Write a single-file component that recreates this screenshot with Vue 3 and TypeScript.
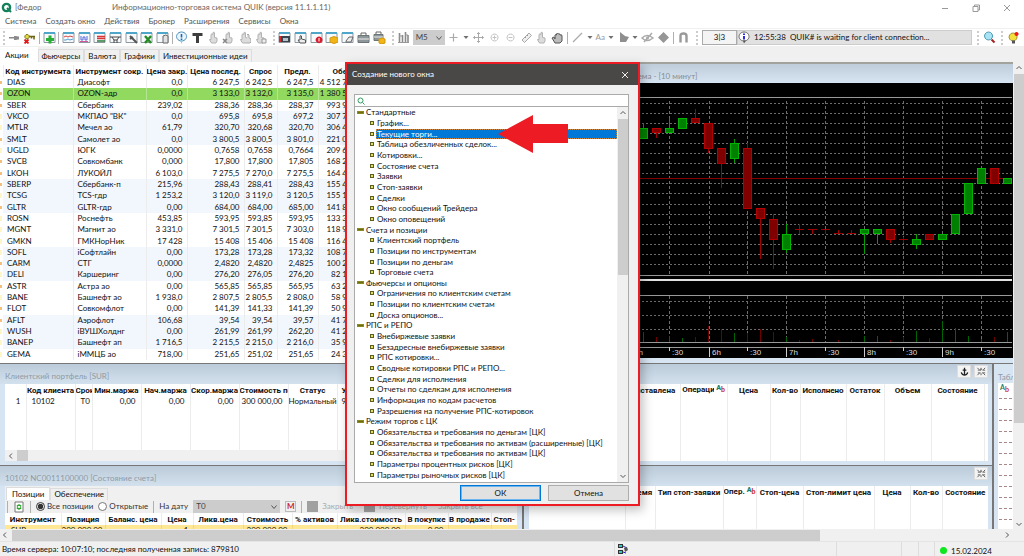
<script setup lang="ts">
import { ref } from 'vue'

interface Shape { d: string; f?: string; s?: string; w?: number }
type Icon = Shape[]

const frame: Shape[] = [
  { d: 'M1 2h11v9.500h-11z', f: '#f7f9fb', s: '#8d979f' },
  { d: 'M1 1h11v2h-11z', f: '#4fa6c9' },
]
const hand: string = 'M4 11.500L2.500 8.500L4 8.500V3.500Q5 2 6 3.500V1.500Q7 .5 7.500 2V6.500L10 7V10L9 12H5z'

const icons: Record<string, Icon> = {
  pin: [{ d: 'M1 6h6v1.500h-6z', f: '#888' }, { d: 'M6 5h2l2 .5h1v3h-1l-2 .5h-2z', f: '#8b8b8b' }],
  key: [
    { d: 'M6 5.500h6M11 5.500v3M8.500 5.500v2', s: '#6b6410', w: 1.500 },
    { d: 'M4 3.500a2.200 2.200 0 1 0 .1 0z', f: '#e8dc45', s: '#777018' },
    { d: 'M1.500 8.500l4 4M5.500 8.500l-4 4', s: '#e21b1b', w: 1.800 },
  ],
  add: [...frame, { d: 'M7 4.500v8M3 8.500h8', s: '#27ae35', w: 3 }],
  price: [...frame, { d: 'M2 6l2-1 2 1 2-1 3 1', s: '#d84444' }, { d: 'M2 9l2 0 2-1 2 1 3-1', s: '#4a9ed4' }],
  graph: [...frame, { d: 'M3 5v4h2v-3h2v3h2v-4', s: '#5866dd' }, { d: 'M2 10.500h8', s: '#cf5a97' }],
  quotes: [...frame, { d: 'M4 5.500h8M4 7.500h8', s: '#da3434', w: 1.500 }, { d: 'M4 10h8', s: '#2c7a3c', w: 1.500 }],
  filter: [...frame, { d: 'M1 6h11M3 6l2 3v3M10 6l-2 3v3M5 9h3', s: '#444' }],
  tool: [...frame, { d: 'M5 5l3 3 4 4M5 8l3-2', s: '#555', w: 2 }],
  excel: [...frame, { d: 'M5 5l6 7M11 5l-6 7', s: '#258b25', w: 2.400 }],
  store: [...frame, { d: 'M7 5q3-2 5 0v7h-5z', f: '#e2e2e2', s: '#666' }],
  info: [{ d: 'M6.500 1a5 4.500 0 1 0 .1 0z', f: '#eaf6ff', s: '#4c8ebb' }, { d: 'M5 9l1.500 4 1.500-4', f: '#9ac7df' }, { d: 'M6.500 3v3.500M6.500 7.500v1.500', s: '#1c67b0', w: 1.600 }],
  text: [{ d: 'M1.500 2h10v3h-3.500v7h-3v-7h-3.500z', f: '#3d3d3d' }],
  hand: [{ d: hand, f: '#dcdcdc', s: '#b2b2b2' }],
  handx: [{ d: hand, f: '#dcdcdc', s: '#b2b2b2' }, { d: 'M1 8l4 4M5 8l-4 4', s: '#888', w: 1.500 }],
  hands: [{ d: hand, f: '#dcdcdc', s: '#b2b2b2' }, { d: 'M9 4q1-2 2 0v3l2 1v3l-1 1h-3', f: '#ddd', s: '#aaa' }],
  handb: [{ d: hand, f: '#dcdcdc', s: '#b2b2b2' }, { d: 'M8 8h4v4h-4z', f: '#eee', s: '#999' }],
  movie: [...frame, { d: 'M2 5h10v6h-10z', f: '#39444d' }, { d: 'M1 5h2v6h-2z', f: '#d32b2b' }, { d: 'M5 7h5v3h-5z', f: '#b7c3cc' }],
  touch: [...frame, { d: 'M6 12l-2-3 2 0V5q1-1 1.500 0v3l4 1v3z', f: '#eee', s: '#555' }],
  alert: [...frame, { d: 'M9 5.500a3.400 3.400 0 1 0 .1 0z', f: '#d81c2c' }, { d: 'M9 7v3.500', s: '#fff' }],
  coin: [...frame, { d: 'M5 7q4-3 8 0v4q-4 3-8 0z', f: '#f2b417', s: '#d39a14' }],
  edit: [...frame, { d: 'M5 10l3-4h4l-2 5h-5z', f: '#eee', s: '#666' }],
  case: [{ d: 'M1 4.500h11v7h-11z', f: '#8d9698', s: '#6b7476' }, { d: 'M4 4v-2h5v2', s: '#666' }, { d: 'M1 8h11', s: '#eee' }],
  casec: [{ d: 'M1 3.500h9v6h-9z', f: '#8d9698', s: '#6b7476' }, { d: 'M3 3v-2h5v2', s: '#666' }, { d: 'M1 6h9', s: '#eee' }, { d: 'M6 8q3-2 6 0v4q-3 2-6 0z', f: '#f2b417', s: '#d39a14' }],
  bars: [{ d: 'M2.500 2v9M5.500 4v7M8.500 1v10M11 4v7', s: '#8a8a8a', w: 1.600 }, { d: 'M1 11.500h11M2 5h3M8 4h3', s: '#999' }],
  plus: [{ d: 'M6.500 2.500v8M2.500 6.500h8', s: '#aaa', w: 1.200 }],
  caret: [{ d: 'M.5 5h5l-2.500 3z', f: '#707070' }],
  move: [{ d: 'M6.500 1.500v10M1.500 6.500h10M5 3l1.500-1.500 1.500 1.500M5 10l1.500 1.500 1.500-1.500M3 5l-1.500 1.500 1.500 1.500M10 5l1.500 1.500-1.500 1.500', s: '#aaa' }],
  zin: [{ d: 'M6.500 3a3.500 3.500 0 1 0 .1 0zM4.500 6.500h4M6.500 4.500v4', s: '#c2c2c2' }],
  zout: [{ d: 'M6.500 3a3.500 3.500 0 1 0 .1 0zM4.500 6.500h4', s: '#c2c2c2' }],
  ruler: [{ d: 'M2 9l7-7 2.500 2.500-7 7z', f: '#eee', s: '#aaa' }, { d: 'M5 6l1 1M7 4l1 1', s: '#999' }],
  grab: [{ d: 'M4 12l-3-5 2-1 1 2V4q1-1 1.500 0V3q1-2 2 0q1-1 1.500 1q2-1 2 1v5l-2 2z', f: '#bbb', s: '#555' }],
  line: [{ d: 'M2 11l9-9', s: '#aaa', w: 1.200 }],
  play: [{ d: 'M3 1l5 4 4 1-3 5h-6z', f: '#8f8f8f' }],
  eye: [{ d: 'M1 7q5-5 11 0q-6 5-11 0zM3 11l8-9', s: '#aaa', w: 1.500 }, { d: 'M6.500 5.500a1.500 1.500 0 1 0 .1 0z', f: '#aaa' }],
  diamond: [{ d: 'M6.500 1l5.500 5.500-5.500 5.500-5.500-5.500z', f: '#969696' }],
  magnet: [{ d: 'M3.500 11.500V5q0-2.500 3-2.500t3 2.500v6.500', s: '#999', w: 2.400 }],
  search: [{ d: 'M5.500 1a4 4 0 1 0 .1 0z', f: '#a9e4f5', s: '#4d9bb4' }, { d: 'M8.500 8.500l3 3', s: '#a52020', w: 2 }],
  bulb: [{ d: 'M6 2a4 4 0 1 0 .1 0z', f: '#f4df3c', s: '#a39535' }, { d: 'M5 9.500h3v3h-3z', f: '#555' }, { d: 'M9.500 1a2 2 0 1 0 .1 0z', f: '#f01c1c' }],
}

const toolsA = ['pin', 'key', '|', 'add', '|', 'price', 'graph', 'quotes', 'filter', 'tool', 'excel', 'store', '|', 'info', 'text', 'hand', 'handx', 'hands', 'handb']
const toolsB = ['movie', 'touch', 'alert', 'coin', 'edit', 'case', 'casec']
const toolsC = ['plus', 'caret', 'move', 'zin', 'zout', 'ruler', 'hand', 'grab', '|', 'line', 'caret', 'Aa', 'caret', 'play', 'caret', 'eye', 'diamond', '|', 'magnet']

const menu = ['Система', 'Создать окно', 'Действия', 'Брокер', 'Расширения', 'Сервисы', 'Окна']
const tabs = ['Акции', 'Фьючерсы', 'Валюта', 'Графики', 'Инвестиционные идеи']

const quoteCols = ['Код инструмента', 'Инструмент сокр.', 'Цена закр.', 'Цена послед.', 'Спрос', 'Предл.', 'Обе']
const quotes: string[][] = [
  ['DIAS', 'Диасофт', '0,0', '6 247,5', '6 242,5', '6 247,5', '4 512 7'],
  ['OZON', 'OZON-адр', '0,0', '3 133,0', '3 132,0', '3 135,0', '1 380 5'],
  ['SBER', 'Сбербанк', '239,02', '288,36', '288,36', '288,37', '993 9'],
  ['VKCO', 'МКПАО "ВК"', '0,0', '695,8', '695,8', '697,2', '307 7'],
  ['MTLR', 'Мечел ао', '61,79', '320,70', '320,68', '320,70', '306 4'],
  ['SMLT', 'Самолет ао', '0,0', '3 800,5', '3 800,5', '3 801,0', '221 0'],
  ['UGLD', 'ЮГК', '0,0000', '0,7658', '0,7658', '0,7664', '209 6'],
  ['SVCB', 'Совкомбанк', '0,000', '17,800', '17,800', '17,805', '168 2'],
  ['LKOH', 'ЛУКОЙЛ', '6 103,0', '7 275,5', '7 270,0', '7 275,5', '164 4'],
  ['SBERP', 'Сбербанк-п', '215,96', '288,43', '288,41', '288,43', '155 4'],
  ['TCSG', 'TCS-гдр', '1 253,2', '3 120,0', '3 119,0', '3 120,5', '155 1'],
  ['GLTR', 'GLTR-гдр', '0,00', '684,00', '684,00', '685,00', '141 8'],
  ['ROSN', 'Роснефть', '453,85', '593,95', '593,85', '593,95', '133 3'],
  ['MGNT', 'Магнит ао', '3 331,0', '7 301,5', '7 301,5', '7 303,0', '118 9'],
  ['GMKN', 'ГМКНорНик', '17 428', '15 408', '15 406', '15 408', '116 4'],
  ['SOFL', 'iСофтлайн', '0,00', '173,28', '173,28', '173,32', '108 7'],
  ['CARM', 'СТГ', '0,0000', '2,4820', '2,4820', '2,4825', '100 2'],
  ['DELI', 'Каршеринг', '0,00', '276,20', '276,05', '276,20', '82 1'],
  ['ASTR', 'Астра ао', '0,00', '565,85', '565,85', '565,95', '63 2'],
  ['BANE', 'Башнефт ао', '1 938,0', '2 807,5', '2 805,5', '2 808,0', '58 9'],
  ['FLOT', 'Совкомфлот', '0,00', '141,39', '141,33', '141,39', '50 9'],
  ['AFLT', 'Аэрофлот', '106,68', '39,54', '39,54', '39,57', '41 7'],
  ['WUSH', 'iВУШХолднг', '0,00', '261,99', '261,99', '262,20', '41 2'],
  ['BANEP', 'Башнефт ап', '1 716,5', '2 215,5', '2 215,0', '2 216,0', '35 9'],
  ['GEMA', 'iММЦБ ао', '718,00', '251,65', '251,02', '251,65', '24 3'],
]
const dotted = [0, 1, 2, 5, 7, 8, 9, 11, 16, 18, 20, 21]

const portfolioCols = ['', 'Код клиента', 'Срок', 'Мин.маржа', 'Нач.маржа', 'Скор.маржа', 'Стоимость по', 'Статус', 'У']
const portfolioRow = ['1', '10102', 'T0', '0,00', '0,00', '0,00', '300 000,00', 'Нормальный', '9']
const accountCols = ['Инструмент', 'Позиция', 'Баланс. цена', 'Цена', 'Ликв.цена', 'Стоимость', '% активов', 'Ликв.стоимость', 'В покупке', 'В продаже', 'Стоп-']
const accountRow = ['SUR', '300 000,00', '', '1', '', '300 000,00', '', '300 000,00', '0,00', '', '']
const orderCols = ['', 'Выставлена', 'Операция', 'Цена', 'Кол-во', 'Исполнено', 'Остаток', 'Объем', 'Состояние', '']
const stopCols = ['', 'Время', 'Тип стоп-заявки', 'Опер.', 'Стоп-цена', 'Стоп-лимит цена', 'Цена', 'Кол-во', 'Состояние']

const tree: { title: string; items: string[] }[] = [
  { title: 'Стандартные', items: ['График...', 'Текущие торги...', 'Таблица обезличенных сделок...', 'Котировки...', 'Состояние счета', 'Заявки', 'Стоп-заявки', 'Сделки', 'Окно сообщений Трейдера', 'Окно оповещений'] },
  { title: 'Счета и позиции', items: ['Клиентский портфель', 'Позиции по инструментам', 'Позиции по деньгам', 'Торговые счета'] },
  { title: 'Фьючерсы и опционы', items: ['Ограничения по клиентским счетам', 'Позиции по клиентским счетам', 'Доска опционов...'] },
  { title: 'РПС и РЕПО', items: ['Внебиржевые заявки', 'Безадресные внебиржевые заявки', 'РПС котировки...', 'Сводные котировки РПС и РЕПО...', 'Сделки для исполнения', 'Отчеты по сделкам для исполнения', 'Информация по кодам расчетов', 'Разрешения на получение РПС-котировок'] },
  { title: 'Режим торгов с ЦК', items: ['Обязательства и требования по деньгам [ЦК]', 'Обязательства и требования по активам (расширенные) [ЦК]', 'Обязательства и требования по активам [ЦК]', 'Параметры процентных рисков [ЦК]', 'Параметры рыночных рисков [ЦК]'] },
]
const rows = tree.flatMap(g => [{ text: g.title, group: true }, ...g.items.map(text => ({ text, group: false }))])
const selected = ref('Текущие торги...')
const query = ref('')
const scope = ref('all')

// Candle: x, body top, body bottom, wick top, wick bottom, direction, volume
type Candle = [number, number, number, number, number, 'g' | 'r', number]
const candles: Candle[] = [
  [643, 128, 139, 123, 139, 'g', 10], [656, 128, 133, 128, 138, 'r', 5], [669, 128, 133, 118, 133, 'g', 6],
  [682, 118, 129, 118, 129, 'g', 4], [695, 118, 123, 109, 123, 'r', 5], [708, 123, 149, 123, 153, 'r', 16],
  [721, 148, 164, 148, 188, 'r', 13], [734, 143, 159, 139, 163, 'g', 9], [747, 148, 209, 143, 209, 'r', 9],
  [760, 208, 219, 208, 259, 'r', 13], [773, 219, 240, 214, 269, 'r', 10], [786, 234, 250, 224, 253, 'g', 5],
  [799, 229, 230, 224, 234, 'r', 2], [812, 229, 230, 229, 234, 'r', 3], [825, 229, 230, 229, 234, 'r', 0],
  [838, 233, 234, 230, 234, 'r', 2], [851, 233, 234, 230, 234, 'r', 2], [864, 229, 234, 229, 254, 'g', 6],
  [877, 229, 234, 229, 244, 'g', 6], [890, 229, 240, 229, 243, 'r', 2], [903, 239, 240, 237, 243, 'r', 5],
  [916, 239, 245, 234, 249, 'g', 11], [929, 234, 240, 234, 240, 'r', 4], [942, 234, 240, 234, 240, 'g', 21],
  [955, 214, 234, 214, 234, 'g', 14], [968, 183, 214, 183, 214, 'g', 6], [981, 168, 184, 168, 184, 'g', 3],
  [994, 168, 184, 168, 184, 'r', 5], [1007, 178, 184, 178, 184, 'g', 10],
]
const gridY = Array.from({ length: 17 }, (_, i) => Math.round(103 + i * 10.05))
const volY = [301, 315, 329]
const ticks: [number, string][] = [[631, '5h'], [669, ':30'], [709, '6h'], [747, ':30'], [786, '7h'], [825, ':30'], [864, '8h'], [903, ':30'], [942, '9h'], [981, ':30']]
</script>

<template>
  <div class="app">
    <header class="titlebar">
      <svg class="logo" viewBox="0 0 12 12"><circle cx="5.500" cy="5.500" r="3.600" fill="none" stroke="#13805c" stroke-width="2.400" /><path d="M6 6l4 4" stroke="#13805c" stroke-width="2" /></svg>
      <span class="user">[Федор</span>
      <span>Информационно-торговая система QUIK (версия 11.1.1.11)</span>
      <div class="winbtns">
        <button aria-label="Свернуть"><svg viewBox="0 0 10 10"><path d="M2 5.500h6" /></svg></button>
        <button aria-label="Развернуть"><svg viewBox="0 0 10 10"><path d="M2 3.500h5v5h-5zM3.500 3.500v-1.500h5v5h-1.500" /></svg></button>
        <button aria-label="Закрыть"><svg viewBox="0 0 10 10"><path d="M2 2l6 6M8 2l-6 6" /></svg></button>
      </div>
    </header>

    <nav class="menu"><a v-for="m in menu" :key="m" href="#">{{ m }}</a></nav>

    <div class="toolbar">
      <div class="tools a">
        <i class="grip"></i>
        <template v-for="(t, i) in toolsA" :key="i">
          <i v-if="t === '|'" class="sep"></i>
          <button v-else :aria-label="t"><svg viewBox="0 0 13 13"><path v-for="(p, k) in icons[t]" :key="k" :d="p.d" :fill="p.f || 'none'" :stroke="p.s || 'none'" :stroke-width="p.w || 1" /></svg></button>
        </template>
      </div>
      <div class="tools b">
        <i class="grip"></i>
        <button v-for="t in toolsB" :key="t" :aria-label="t"><svg viewBox="0 0 13 13"><path v-for="(p, k) in icons[t]" :key="k" :d="p.d" :fill="p.f || 'none'" :stroke="p.s || 'none'" :stroke-width="p.w || 1" /></svg></button>
      </div>
      <div class="tools c">
        <i class="grip"></i>
        <button aria-label="bars"><svg viewBox="0 0 13 13"><path v-for="(p, k) in icons.bars" :key="k" :d="p.d" fill="none" :stroke="p.s" :stroke-width="p.w || 1" /></svg></button>
        <div class="pick m5"><select aria-label="Интервал"><option>M5</option></select><svg viewBox="0 0 8 8"><path d="M1.500 2.500l2.500 3 2.500-3" /></svg></div>
        <template v-for="(t, i) in toolsC" :key="i">
          <i v-if="t === '|'" class="sep"></i>
          <button v-else-if="t === 'Aa'" class="aa">Aa</button>
          <button v-else :class="{ narrow: t === 'caret' }" :aria-label="t"><svg :viewBox="t === 'caret' ? '0 0 6 13' : '0 0 13 13'"><path v-for="(p, k) in icons[t]" :key="k" :d="p.d" :fill="p.f || 'none'" :stroke="p.s || 'none'" :stroke-width="p.w || 1" /></svg></button>
        </template>
      </div>
      <div class="tools msg">
        <i class="grip"></i>
        <span class="count">3|3</span>
        <span class="message">
          <svg viewBox="0 0 12 13"><path d="M6 1a5 4.500 0 1 0 .1 0z" fill="#fff" stroke="#666" /><path d="M5 9.500l1 3 2-3z" fill="#555" /><path d="M6 2.500v1.500M6 5v3.500" stroke="#1414e6" stroke-width="1.800" /></svg>
          12:55:38&nbsp; QUIK# is waiting for client connection...
        </span>
      </div>
      <div class="tools one"><i class="grip"></i><button aria-label="Поиск"><svg viewBox="0 0 13 13"><path v-for="(p, k) in icons.search" :key="k" :d="p.d" :fill="p.f || 'none'" :stroke="p.s" :stroke-width="p.w || 1" /></svg></button></div>
      <div class="tools one"><i class="grip"></i><button aria-label="Идеи"><svg viewBox="0 0 13 13"><path v-for="(p, k) in icons.bulb" :key="k" :d="p.d" :fill="p.f || 'none'" :stroke="p.s || 'none'" /></svg></button></div>
    </div>

    <div class="tabs">
      <button v-for="(t, i) in tabs" :key="t" :class="{ active: i === 0 }">{{ t }}</button>
    </div>

    <div class="desk">
      <div class="mdi">
        <div class="band top">
          <section class="quotes">
            <table>
              <colgroup><col class="q0"><col class="q1"><col class="q2"><col class="q3"><col class="q4"><col class="q5"><col class="q6"><col class="q7"><col></colgroup>
              <thead><tr><th></th><th v-for="c in quoteCols" :key="c">{{ c }}</th><th></th></tr></thead>
              <tbody>
                <tr v-for="(r, i) in quotes" :key="r[0]" :class="{ alt: Math.floor(i / 3) % 2 === 1, hit: i === 1 }">
                  <td class="mark"><i :class="{ dot: dotted.includes(i) }"></i></td>
                  <td v-for="(c, k) in r" :key="k">{{ c }}</td><td></td>
                </tr>
              </tbody>
            </table>
          </section>
          <section class="chart">
            <h2>Система - [10 минут]</h2>
            <svg viewBox="398 83 615 275" preserveAspectRatio="xMaxYMin meet" shape-rendering="crispEdges">
              <rect x="398" y="83" width="615" height="275" fill="#000" />
              <g stroke="#6c6c6c" stroke-dasharray="2 2" fill="none">
                <path v-for="y in gridY" :key="y" :d="`M398 ${y}.500H1012`" />
                <path v-for="y in volY" :key="y" :d="`M398 ${y}.500H1012`" />
              </g>
              <g stroke="#6c6c6c" stroke-dasharray="3 2">
                <path v-for="t in ticks" :key="t[0]" :d="`M${t[0]}.500 101V275M${t[0]}.500 296V342`" />
              </g>
              <path d="M398 178.500H1012" stroke="#860000" />
              <path d="M398 97.500H1012" stroke="#999" stroke-width="1" />
              <path d="M398 275.500H1012M398 295.500H1012M398 342.500H1012M398 347.500H1012" stroke="#999" />
              <path d="M398 280H1012" stroke="#e2e2e2" stroke-width="2" />
              <g v-for="c in candles" :key="c[0]" :class="c[5]">
                <path :d="`M${c[0]}.500 ${c[3]}V${c[4]}`" />
                <path v-if="c[2] - c[1] < 3" :d="`M${c[0] - 4} ${c[1]}.500h9`" />
                <rect v-else :x="c[0] - 3.500" :y="c[1] + 0.500" width="8" :height="c[2] - c[1] - 1" />
                <path class="vol" :d="`M${c[0]}.500 ${342 - c[6]}V342`" />
              </g>
              <g v-for="t in ticks" :key="t[0]">
                <path :d="`M${t[0]}.500 347v${t[1] === ':30' ? 4 : 10}`" stroke="#ccc" />
                <text :x="t[0] + 3" y="355">{{ t[1] }}</text>
              </g>
            </svg>
          </section>
        </div>

        <div class="band mid">
          <section class="pane left">
            <div class="cap"><h2>Клиентский портфель [SUR]</h2></div>
            <div class="sheet">
              <table>
                <colgroup><col class="p0"><col class="p1"><col class="p2"><col class="p3"><col class="p3"><col class="p3"><col class="p3"><col class="p3"><col></colgroup>
                <thead><tr><th v-for="c in portfolioCols" :key="c">{{ c }}</th></tr></thead>
                <tbody>
                  <tr class="line"><td v-for="(c, i) in portfolioRow" :key="i">{{ c }}</td></tr>
                  <tr><td v-for="(c, i) in portfolioRow" :key="i"></td></tr>
                </tbody>
              </table>
              <div class="hbar"><svg viewBox="0 0 8 8"><path d="M5 1.500l-2.500 2.500 2.500 2.500" /></svg><i></i></div>
            </div>
          </section>
          <section class="pane grow">
            <div class="cap"><button aria-label="Якорь"><svg viewBox="0 0 12 12"><path d="M6 2v8M4 4.500h4M2.500 7q1 3 3.500 3t3.500-3" fill="none" stroke="#222" stroke-width="1.400" /></svg></button><button aria-label="Связать"><svg viewBox="0 0 12 12"><path d="M1.500 2l2 2M5.500 2v2M10 2l-2 2M2 4.500h3.500v-1.500M7 4.500h3M1.500 10l2-2M5.500 10v-2M10 10l-2-2M2 7.500h3M6.500 7.500h3.500" fill="none" stroke="#555" /></svg></button></div>
            <div class="sheet">
              <table>
                <colgroup><col><col class="o1"><col class="o2"><col class="o3"><col class="o4"><col class="o5"><col class="o6"><col class="o7"><col class="o8"><col class="o9"></colgroup>
                <thead><tr><th v-for="(c, i) in orderCols" :key="i"><span v-if="i === 2" class="ab"><span>{{ c }}</span><b>A</b><em>b</em></span><template v-else>{{ c }}</template></th></tr></thead>
                <tbody><tr><td v-for="(c, i) in orderCols" :key="i"></td></tr></tbody>
              </table>
            </div>
          </section>
        </div>

        <div class="band low">
          <section class="pane left">
            <div class="cap"><h2>10102 NC0011100000 [Состояние счета]</h2></div>
            <div class="sheet acc">
              <div class="subtabs"><button class="active">Позиции</button><button>Обеспечение</button></div>
              <div class="subtools">
                <i class="sep"></i>
                <button class="fresh" aria-label="Обновить"><svg viewBox="0 0 12 12"><path d="M2 1h8v10h-8z" fill="#fff" stroke="#777" /><path d="M4 5.500q2-3 4 0M8 6.500q-2 3-4 0" fill="none" stroke="#27a327" stroke-width="1.600" /></svg></button>
                <i class="sep"></i>
                <label><input v-model="scope" type="radio" value="all">Все позиции</label>
                <label><input v-model="scope" type="radio" value="open">Открытые</label>
                <i class="sep"></i>
                <label for="date">На дату</label>
                <div class="pick date"><select id="date"><option>T0</option></select><svg viewBox="0 0 8 8"><path d="M1.500 2.500l2.500 3 2.500-3" /></svg></div>
                <button class="em">M</button>
                <i class="sep"></i>
                <button class="off" disabled><i></i>Закрыть</button>
                <button class="off" disabled><i></i>Перевернуть</button>
                <button class="off" disabled>Закрыть все</button>
              </div>
              <table>
                <colgroup><col class="a0"><col class="a1"><col class="a2"><col class="a3"><col class="a4"><col class="a5"><col class="a6"><col class="a7"><col class="a8"><col class="a8"><col></colgroup>
                <thead><tr><th v-for="c in accountCols" :key="c">{{ c }}</th></tr></thead>
                <tbody><tr><td v-for="(c, i) in accountRow" :key="i">{{ c }}</td></tr></tbody>
              </table>
            </div>
          </section>
          <section class="pane grow">
            <div class="cap"><button aria-label="Связать"><svg viewBox="0 0 12 12"><path d="M1.500 2l2 2M5.500 2v2M10 2l-2 2M2 4.500h3.500v-1.500M7 4.500h3M1.500 10l2-2M5.500 10v-2M10 10l-2-2M2 7.500h3M6.500 7.500h3.500" fill="none" stroke="#555" /></svg></button></div>
            <div class="sheet">
              <table>
                <colgroup><col><col class="s1"><col class="s2"><col class="s3"><col class="s4"><col class="s5"><col class="s6"><col class="s7"><col class="s8"></colgroup>
                <thead><tr><th v-for="(c, i) in stopCols" :key="i"><span v-if="i === 3" class="ab"><span>{{ c }}</span><b>A</b><em>b</em></span><template v-else>{{ c }}</template></th></tr></thead>
                <tbody><tr><td v-for="(c, i) in stopCols" :key="i"></td></tr></tbody>
              </table>
            </div>
          </section>
        </div>

        <section class="side">
          <h2>Таблица</h2>
          <div class="deals"><span class="ab"><b>A</b><em>b</em></span><i v-for="n in 12" :key="n"></i></div>
        </section>
      </div>
      <div class="vbar"><svg viewBox="0 0 8 8"><path d="M1.500 5l2.500-2.500 2.500 2.500" /></svg><i></i><svg viewBox="0 0 8 8"><path d="M1.500 3l2.500 2.500 2.500-2.500" /></svg></div>
    </div>

    <div class="hscroll"><svg viewBox="0 0 8 8"><path d="M5 1.500l-2.500 2.500 2.500 2.500" /></svg><i></i><svg viewBox="0 0 8 8"><path d="M3 1.500l2.500 2.500-2.500 2.500" /></svg></div>

    <footer class="status">
      <span class="server">Время сервера: 10:07:10; последняя полученная запись: 879810</span>
      <span class="net"><svg viewBox="0 0 12 12"><path d="M1 1h5v4h-5zM1 7h5v4h-5z" fill="#333" /><path d="M2 2h3v2h-3zM2 8h3v2h-3z" fill="#35c8c8" /><path d="M6 3l4 2M6 9l3 1" stroke="#2222c8" /><path d="M7 5l3-1 1 3-3 2z" fill="#555" /></svg></span>
      <span class="s2"></span><span class="s3"></span><span class="s4"></span>
      <span class="date-cell"><i></i>15.02.2024</span>
    </footer>

    <div class="dialog" role="dialog" aria-label="Создание нового окна">
      <div class="dlg-title"><span>Создание нового окна</span><button aria-label="Закрыть"><svg viewBox="0 0 10 10"><path d="M2 2l6 6M8 2l-6 6" /></svg></button></div>
      <div class="dlg-body">
        <label class="find"><svg viewBox="0 0 10 10"><circle cx="4.500" cy="4.500" r="2.500" /><path d="M6.500 6.500l2 2" /></svg><input v-model="query" type="text" aria-label="Поиск окна"></label>
        <div class="listbox">
          <ul>
            <li v-for="r in rows" :key="r.text" :class="{ group: r.group, sel: r.text === selected }"><i></i><span @click="selected = r.text">{{ r.text }}</span></li>
          </ul>
          <div class="lbar"><svg viewBox="0 0 8 8"><path d="M1.500 5l2.500-2.500 2.500 2.500" /></svg><i></i><svg viewBox="0 0 8 8"><path d="M1.500 3l2.500 2.500 2.500-2.500" /></svg></div>
        </div>
        <div class="dlg-btns"><button class="ok">ОК</button><button>Отмена</button></div>
      </div>
      <svg class="arrow" viewBox="0 0 70 38"><path d="M0 19L35 0V9H70V28H35V38z" fill="#ed1c24" /></svg>
    </div>
  </div>
</template>

<style>
html, body { margin: 0; overflow: hidden; }
</style>

<style scoped>
* { box-sizing: border-box; }
.app { position: relative; display: flex; flex-direction: column; height: 100vh; overflow: hidden; background: #f0f0f0; color: #111; font: 8px/11px Lato, "Open Sans", sans-serif; }
button, input, select { font: inherit; color: inherit; margin: 0; padding: 0; border: 0; background: none; }
h2 { margin: 0; font-size: 8px; font-weight: 400; color: #8f9aa6; }
i { flex: none; }
em { font-style: normal; }
table { border-collapse: collapse; table-layout: fixed; width: 100%; height: 100%; }
th, td { padding: 0; white-space: nowrap; overflow: hidden; border-right: 1px solid #ececec; line-height: 11px; }
th { height: 12px; text-align: center; font-weight: 700; font-family: Roboto, Lato, sans-serif; }
td { height: 11px; }
th:last-child, td:last-child { border-right: 0; }

.titlebar { flex: none; display: flex; align-items: center; height: 15px; background: #fff; color: #666; }
.logo { width: 12px; height: 12px; margin: 0 2px 0 1px; }
.user { width: 97px; }
.winbtns { display: flex; gap: 21px; margin-left: auto; padding-right: 12px; }
.winbtns button { display: flex; }
.winbtns svg { width: 10px; height: 10px; fill: none; stroke: #999; }
.menu { flex: none; display: flex; gap: 9px; height: 13px; padding-left: 5px; align-items: center; background: #fff; }
.menu a { color: #555; text-decoration: none; }

.toolbar { flex: none; display: flex; height: 18px; border-top: 1px solid #f0f0f0; background: #f4f4f4; overflow: hidden; }
.tools { flex: none; display: flex; align-items: center; justify-content: space-between; background: #fff; height: 17px; padding: 0 3px; }
.tools.a { width: 270px; }
.tools.b { width: 119px; }
.tools.c { width: 304px; }
.tools.msg { flex: 1; gap: 4px; justify-content: flex-start; padding-right: 4px; }
.tools.one { width: 24px; padding: 0 4px 0 1px; }
.tools button { display: flex; flex: none; color: #999; }
.tools button svg { width: 13px; height: 13px; }
.tools button.narrow svg { width: 6px; }
.grip { width: 2px; height: 14px; border-left: 2px dotted #ccc; }
.sep { width: 1px; height: 12px; background: #b0b0b0; }
.count { flex: none; width: 35px; height: 15px; border: 1px solid #aaa; text-align: center; line-height: 13px; background: #f4f4f4; }
.message { flex: 1; display: flex; align-items: center; gap: 4px; height: 15px; margin-left: -4px; background: #e1e1e1; border: 1px solid #ccc; white-space: nowrap; }
.message svg { width: 12px; height: 13px; }
.pick { position: relative; display: flex; align-items: center; background: #ccc; color: #444; }
.pick select { appearance: none; flex: 1; padding-left: 3px; height: 100%; }
.pick svg { width: 8px; height: 8px; margin-right: 2px; pointer-events: none; }
.m5 { width: 32px; height: 15px; }
.pick path, .vbar path, .hscroll path, .hbar path, .lbar path { fill: none; stroke: #555; stroke-width: 1; }

.tabs { flex: none; display: flex; align-items: flex-end; height: 16px; }
.tabs button { height: 13px; padding: 0 3px; border: 1px solid #ddd; border-bottom: 0; line-height: 12px; }
.tabs button.active { height: 15px; padding: 0 8px 0 4px; background: #fff; border-color: #fff; }

.desk { flex: 1; display: flex; min-height: 0; }
.mdi { flex: 1; display: grid; grid-template-columns: 1fr 21px; grid-template-rows: 301px 102px 1fr; min-width: 0; overflow: hidden; background: #d7e4f2; }
.band { display: flex; min-width: 0; min-height: 0; overflow: hidden; }
.top { grid-column: 1 / 3; }
.mid, .low { grid-column: 1; }
.side { grid-column: 2; grid-row: 2 / 4; }
.quotes { flex: none; width: 398px; padding-top: 3px; background: #fff; }
.quotes table { height: 295px; }
.q0 { width: 3px; } .q1 { width: 70px; } .q2 { width: 73px; } .q3 { width: 41px; } .q4 { width: 57px; } .q5 { width: 33px; } .q6 { width: 41px; } .q7 { width: 30px; }
.quotes td:nth-child(n+4) { text-align: right; padding-right: 4px; }
.quotes td:nth-child(2), .quotes td:nth-child(3) { padding-left: 4px; }
.quotes td:nth-child(8), .quotes th:nth-child(8) { text-align: right; padding-right: 1px; border-right: 0; }
.quotes td.mark { border: 0; background: #fff; }
.mark i { display: block; width: 2px; height: 5px; background: #fff6c8; }
.mark i.dot { height: 3px; background: #f3c07c; }
.alt td { background: #f1f7fd; }
.hit td { background: #92d960; border-color: #b4e693; }

.chart { flex: 1; display: flex; flex-direction: column; min-width: 0; border-top: 2px solid #a3a39d; }
.chart h2 { flex: none; height: 19px; padding: 4px 0 0 222px; line-height: 16px; background: linear-gradient(#bfcddb, #d7e4f2); color: #858e96; }
.chart svg { width: 100%; height: 275px; }
.g rect { fill: #008000; stroke: #00b400; } .g path { stroke: #00a000; }
.r rect { fill: #800000; stroke: #b40000; } .r path { stroke: #a00000; }
.g .vol { stroke: #006400; } .r .vol { stroke: #6e0000; }
.chart text { fill: #ddd; font: 8px "Liberation Sans", Arial, sans-serif; }

.pane { display: flex; flex-direction: column; min-width: 0; border-top: 1px solid #777; padding: 0 5px; background: #d7e4f2; }
.pane.left { flex: none; width: 524px; border-right: 2px solid #777; }
.pane.grow { flex: 1; padding-right: 4px; }
.cap { flex: none; display: flex; align-items: center; justify-content: flex-end; gap: 3px; height: 20px; margin: 0 -5px; padding: 0 5px; background: linear-gradient(#bccbd9, #d3e1ee); }
.cap h2 { flex: 1; padding-top: 4px; }
.cap button { display: flex; width: 14px; height: 13px; justify-content: center; align-items: center; margin-top: -6px; background: #f4f4f4; border: 1px solid #ddd; }
.cap svg { width: 11px; height: 11px; }
.sheet { flex: 1; display: flex; flex-direction: column; min-height: 0; background: #fff; margin-bottom: 4px; }
.sheet table { flex: 1; }
.low .sheet { margin-bottom: 0; }
.line td { height: 11px; }
.p0 { width: 21px; } .p1 { width: 49px; } .p2 { width: 17px; } .p3 { width: 49px; }
.line td { text-align: right; padding-right: 5px; }
.line td:nth-child(2), .line td:nth-child(3) { text-align: left; padding-left: 5px; padding-right: 0; }
.line td:nth-child(8) { padding: 0; text-align: center; }
.line td:nth-child(9), .mid .left th:nth-child(9) { padding-left: 4px; text-align: left; }
.mid tbody tr:not(.line) td { height: auto; }
.mid tbody tr:last-child { height: 100%; }
.hbar { flex: none; display: flex; align-items: center; gap: 2px; height: 11px; background: #f0f0f0; }
.hbar svg, .vbar svg, .lbar svg, .hscroll svg { width: 8px; height: 8px; }
.hbar svg { margin-left: 2px; }
.hbar i { width: 11px; height: 11px; background: #cdcdcd; }
.o1 { width: 56px; } .o2 { width: 47px; } .o3 { width: 43px; } .o4 { width: 30px; } .o5 { width: 46px; } .o6 { width: 38px; } .o7 { width: 47px; } .o8 { width: 53px; } .o9 { width: 4px; }
.s1 { width: 30px; } .s2 { width: 68px; } .s3 { width: 33px; } .s4 { width: 47px; } .s5 { width: 71px; } .s6 { width: 36px; } .s7 { width: 32px; } .s8 { width: 46px; }
.ab { display: flex; justify-content: center; font-size: 8px; }
.ab span { overflow: hidden; max-width: 32px; margin-right: 2px; }
.ab b { margin-top: -1px; color: #17806a; font-size: 7px; }
.ab em { color: #c83232; font-size: 7px; font-weight: 700; margin-top: 1px; }

.acc { background: #f0f0f0; }
.subtabs { flex: none; display: flex; align-items: flex-end; height: 14px; padding-left: 1px; }
.subtabs button { height: 12px; padding: 0 3px; border: 1px solid #ddd; border-bottom: 0; }
.subtabs button.active { height: 13px; padding: 0 5px; background: #fff; }
.subtools { flex: none; display: flex; align-items: center; gap: 5px; height: 13px; padding-left: 2px; white-space: nowrap; overflow: hidden; color: #333; }
.subtools label { display: flex; align-items: center; gap: 2px; }
.subtools input { width: 9px; height: 9px; accent-color: #333; }
.fresh { display: flex; }
.fresh svg { width: 12px; height: 12px; }
.date { width: 87px; height: 13px; }
.em { width: 11px; height: 11px; border: 1px solid #bbb; color: #c81e1e; font-weight: 700; line-height: 9px; }
.off { display: flex; align-items: center; gap: 4px; color: #a8a8a8; margin-right: 6px; }
.off i { width: 11px; height: 11px; background: #a0a0a0; }
.acc table { background: #fff; }
.acc tbody td { background: #ffe793; text-align: right; padding-right: 4px; border-color: #f4d878; }
.acc tbody td:first-child { text-align: left; padding-left: 6px; }
.a0 { width: 56px; } .a1 { width: 44px; } .a2 { width: 56px; } .a3 { width: 32px; } .a4 { width: 50px; } .a5 { width: 49px; } .a6 { width: 45px; } .a7 { width: 68px; } .a8 { width: 43px; }

.side { display: flex; flex-direction: column; overflow: hidden; border-top: 1px solid #777; border-left: 2px solid #777; padding-left: 4px; background: #d7e4f2; }
.side h2 { height: 20px; padding-top: 8px; }
.deals { flex: 1; background: #fff; padding: 0 1px; }
.deals .ab { justify-content: flex-start; padding: 0 1px; height: 15px; }
.deals i { display: block; height: 11px; border-top: 1px dashed #a88; }

.vbar { flex: none; display: flex; flex-direction: column; align-items: center; gap: 2px; width: 11px; padding: 2px 0 1px; background: #f0f0f0; }
.vbar i { width: 10px; height: 349px; margin-bottom: auto; background: #cdcdcd; }
.hscroll { flex: none; display: flex; align-items: center; justify-content: space-between; height: 12px; padding: 0 13px 0 1px; }
.hscroll i { flex: none; width: 80%; height: 11px; margin: 0 auto 0 3px; background: #cdcdcd; }
.status { flex: none; display: grid; grid-template-columns: 614px 1fr 65px 17px 16px 90px; height: 15px; background: #f0f0f0; border-top: 1px solid #e4e4e4; align-items: stretch; line-height: 14px; }
.status > span + span { border-left: 1px solid #ddd; }
.server { padding-left: 2px; white-space: nowrap; }
.net svg { width: 12px; height: 12px; margin: 1px 0 0 2px; }
.date-cell { display: flex; align-items: center; gap: 4px; padding-left: 5px; }
.date-cell i { width: 7px; height: 7px; border-radius: 50%; background: #0ee61e; }

.dialog { position: absolute; left: 345px; top: 62px; width: 295px; height: 444px; display: flex; flex-direction: column; border: 2px solid #ed1c24; background: #f0f0f0; box-shadow: 3px 4px 10px rgba(0, 0, 0, .25); }
.dlg-title { flex: none; display: flex; align-items: center; justify-content: space-between; height: 21px; padding: 0 8px 0 5px; background: #4a4846; color: #fff; }
.dlg-title button { display: flex; }
.dlg-title svg { width: 10px; height: 10px; stroke: #eee; fill: none; }
.dlg-body { flex: 1; display: flex; flex-direction: column; min-height: 0; padding: 9px 9px 3px 7px; }
.find { flex: none; display: flex; align-items: center; height: 13px; border: 1px solid #aaa; background: #fff; }
.find svg { width: 10px; height: 10px; margin-left: 1px; fill: none; stroke: #2f9e5f; stroke-width: 1; }
.find input { flex: 1; min-width: 0; outline: none; height: 10px; }
.listbox { flex: 1; display: flex; min-height: 0; border: 1px solid #aaa; border-top: 0; background: #fff; }
.listbox ul { flex: 1; display: flex; flex-direction: column; min-width: 0; margin: 0; padding: 0 0 2px; list-style: none; }
.listbox li { flex: 1; display: flex; align-items: center; min-height: 0; padding-left: 15px; line-height: 10px; white-space: nowrap; }
.listbox li i { width: 4px; height: 4px; margin-right: 2px; border: 1px solid #5e5e1c; background: #e0e060; }
.listbox li span { flex: 1; padding-left: 1px; }
.listbox li.group { padding-left: 2px; }
.listbox li.group i { width: 7px; height: 3px; border-color: #8a8a24; background: #6d6d10; margin-right: 1px; }
.listbox li.sel span { background: #0078d7; color: #fff; outline: 1px dotted #c88642; outline-offset: -1px; }
.lbar { flex: none; display: flex; flex-direction: column; align-items: center; gap: 2px; width: 11px; padding: 2px 0; background: #f0f0f0; }
.lbar i { width: 10px; height: 156px; margin-bottom: auto; background: #cdcdcd; }
.dlg-btns { flex: none; display: flex; justify-content: flex-end; gap: 7px; padding-top: 2px; }
.dlg-btns button { width: 81px; height: 16px; background: #e1e1e1; border: 1px solid #adadad; }
.dlg-btns .ok { border: 1px solid #0078d7; outline: 1px solid #6db3ec; outline-offset: -2px; }
.arrow { position: absolute; left: 151px; top: 51px; width: 70px; height: 38px; }
</style>
